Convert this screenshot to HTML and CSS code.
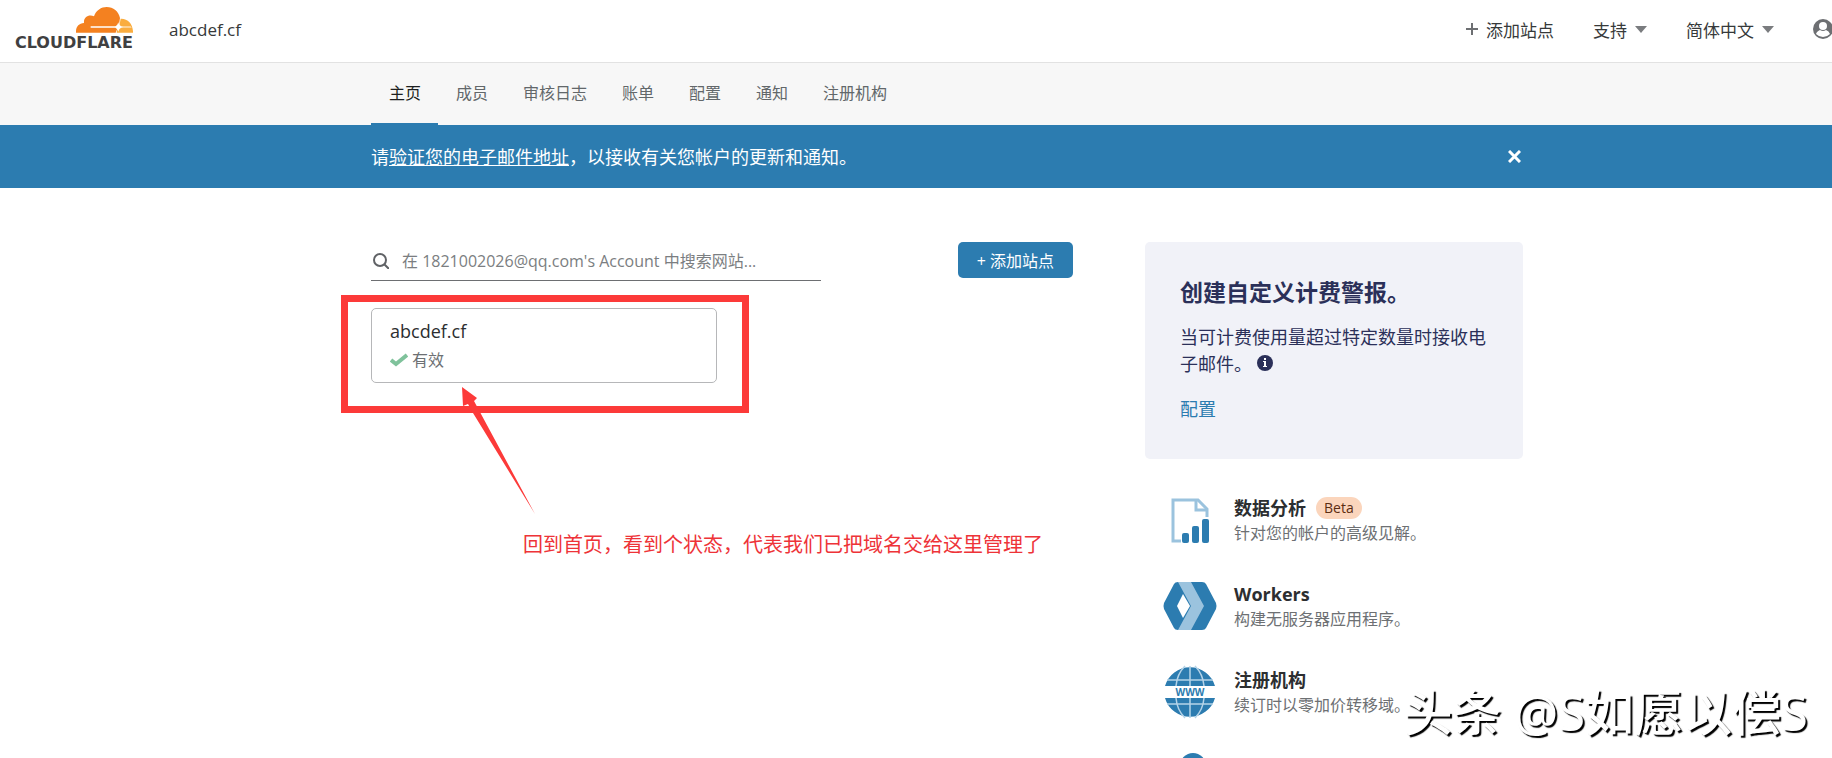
FILE: index.html
```
<!DOCTYPE html>
<html lang="zh-CN">

<head>
    <meta charset="UTF-8">
    <meta name="viewport" content="width=device-width, initial-scale=1.0">
    <title>abcdef.cf | Cloudflare</title>
    <link rel="stylesheet" href="styles.css">
</head>

<body>
    <div class="page">

        <header class="topbar">
            <a href="#" class="logo">
                <svg class="logo-cloud" viewBox="0 0 171 78" aria-hidden="true">
                    <path fill="#f48120" d="M0 77C-1 60 8 49 24 48C22 31 38 21 54 28C60 10 76 0 92 0C112 0 128 13 132 33L129 52L119 77Z" />
                    <path fill="#faad3f" d="M134 35C156 34 172 52 171 77H122C122 70 126 64 130 56Z" />
                    <path fill="#fff" d="M44 58H118Q125 55 127 46Q129 57 141 60Q129 63 127 74Q125 65 118 62H44Z" />
                    <path fill="#fff" d="M136 58H164L167 62H136Z" opacity=".6" />
                </svg>
                <span class="logo-name">CLOUDFLARE</span>
            </a>
            <a href="#" class="site-name">abcdef.cf</a>
            <div class="top-actions">
                <button class="top-btn">
                    <svg width="12" height="12" viewBox="0 0 12 12" aria-hidden="true"><path d="M6 0V12M0 6H12" stroke="#6d6f72" stroke-width="2" /></svg>
                    添加站点
                </button>
                <button class="top-btn">支持
                    <svg width="12" height="7" viewBox="0 0 12 7" aria-hidden="true"><path d="M0 0H12L6 7Z" fill="#7a7c7f" /></svg>
                </button>
                <button class="top-btn">简体中文
                    <svg width="12" height="7" viewBox="0 0 12 7" aria-hidden="true"><path d="M0 0H12L6 7Z" fill="#7a7c7f" /></svg>
                </button>
                <button class="top-btn" aria-label="账户">
                    <svg width="20" height="20" viewBox="0 0 20 20" aria-hidden="true">
                        <circle cx="10" cy="10" r="10" fill="#6d6f72" />
                        <circle cx="10" cy="7" r="4" fill="#fff" />
                        <path d="M3 15C4 12 7 11 7 11Q10 13 13 11Q16 12 17 15Q14 18 10 18Q6 18 3 15Z" fill="#fff" />
                    </svg>
                </button>
            </div>
        </header>

        <nav class="subnav">
            <div class="container tabs">
                <a href="#" class="tab active">主页</a>
                <a href="#" class="tab">成员</a>
                <a href="#" class="tab">审核日志</a>
                <a href="#" class="tab">账单</a>
                <a href="#" class="tab">配置</a>
                <a href="#" class="tab">通知</a>
                <a href="#" class="tab">注册机构</a>
            </div>
        </nav>

        <div class="banner">
            <div class="container banner-row">
                <p>请<a href="#">验证您的电子邮件地址</a>，以接收有关您帐户的更新和通知。</p>
                <button class="close" aria-label="关闭">
                    <svg width="13" height="13" viewBox="0 0 13 13" aria-hidden="true"><path d="M1 1L12 12M12 1L1 12" stroke="#fff" stroke-width="3" /></svg>
                </button>
            </div>
        </div>

        <main class="content">
            <div class="container columns">
                <section class="sites">
                    <div class="toolbar">
                        <label class="search">
                            <svg width="16" height="16" viewBox="0 0 16 16" fill="none" stroke="#606266" stroke-width="2" aria-hidden="true">
                                <circle cx="7" cy="7" r="6" />
                                <path d="M11 11L16 16" />
                            </svg>
                            <input type="text" aria-label="搜索网站" placeholder="在 1821002026@qq.com's Account 中搜索网站...">
                        </label>
                        <button class="add-btn">+ 添加站点</button>
                    </div>

                    <div class="marked">
                        <a href="#" class="site-card">
                            <span class="site-title">abcdef.cf</span>
                            <span class="site-status">
                                <svg width="18" height="14" viewBox="0 0 18 14" aria-hidden="true"><path d="M1 7L6 11L17 2" fill="none" stroke="#7fc29b" stroke-width="4" /></svg>
                                有效
                            </span>
                        </a>
                        <!-- red notes drawn over the page -->
                        <div class="frame"></div>
                        <svg class="arrow" width="74" height="128" viewBox="0 0 74 128" aria-hidden="true">
                            <path fill="#fc3a39" d="M0 0L15 11L12 14L73 127L11 26L6 17L1 19Z" />
                        </svg>
                        <p class="note">回到首页，看到个状态，代表我们已把域名交给这里管理了</p>
                    </div>
                </section>

                <aside class="side">
                    <div class="alert-card">
                        <h2>创建自定义计费警报。</h2>
                        <p>当可计费使用量超过特定数量时接收电子邮件。
                            <svg class="info" width="16" height="16" viewBox="0 0 16 16" aria-hidden="true">
                                <circle cx="8" cy="8" r="8" fill="#2b3059" />
                                <path d="M7 3H9V5H7ZM6 6H9V11H10V12H6V11H7V7H6Z" fill="#fff" />
                            </svg>
                        </p>
                        <a href="#">配置</a>
                    </div>

                    <ul class="products">
                        <li>
                            <svg class="product-icon" viewBox="0 0 54 54" aria-hidden="true">
                                <path d="M18 48H10V7H35L44 16V24" fill="none" stroke="#9bc3de" stroke-width="3" />
                                <path d="M33 7V17H44" fill="none" stroke="#9bc3de" stroke-width="3" />
                                <rect x="19" y="40" width="7" height="10" rx="2" fill="#2c7cb0" />
                                <rect x="29" y="33" width="7" height="17" rx="2" fill="#2c7cb0" />
                                <rect x="39" y="26" width="7" height="24" rx="2" fill="#2c7cb0" />
                            </svg>
                            <div>
                                <h3>数据分析 <span class="beta">Beta</span></h3>
                                <p>针对您的帐户的高级见解。</p>
                            </div>
                        </li>
                        <li>
                            <svg class="product-icon" viewBox="0 0 54 54" aria-hidden="true">
                                <path fill="#2c7cb0" d="M15 3H39Q42 3 43 5L53 24Q54 27 53 30L43 49Q42 51 39 51H15Q12 51 11 49L1 30Q0 27 1 24L11 5Q12 3 15 3Z" />
                                <path fill="#9bc3de" d="M15 3H28L41 27L28 51H15L28 27Z" />
                                <path fill="#fff" d="M20 15L27 27L20 39L14 27Z" />
                            </svg>
                            <div>
                                <h3>Workers</h3>
                                <p>构建无服务器应用程序。</p>
                            </div>
                        </li>
                        <li>
                            <svg class="product-icon" viewBox="0 0 54 54" aria-hidden="true">
                                <path fill="#2c7cb0" d="M2 21A26 26 0 0 1 52 21ZM2 33A26 26 0 0 0 52 33Z" />
                                <path fill="none" stroke="#b4d3e8" stroke-width="1.5" d="M27 1V21M27 33V53M4 15H50M4 39H50M22 1Q14 9 13 21M32 1Q40 9 41 21M13 33Q14 45 22 53M41 33Q40 45 32 53" />
                                <text x="27" y="31" class="www">WWW</text>
                            </svg>
                            <div>
                                <h3>注册机构</h3>
                                <p>续订时以零加价转移域。</p>
                            </div>
                        </li>
                        <li>
                            <svg class="product-icon" viewBox="0 0 54 54" aria-hidden="true">
                                <circle cx="30" cy="15" r="13" fill="#2c7cb0" />
                            </svg>
                        </li>
                    </ul>
                </aside>
            </div>
        </main>

        <div class="watermark">头条 @S如愿以偿S</div>
    </div>
</body>

</html>
```
FILE: styles.css
```
* {
    box-sizing: border-box;
}

body {
    margin: 0;
    font-family: "Open Sans", "Noto Sans CJK SC", sans-serif;
    font-size: 16px;
    font-weight: 400;
    color: #36393a;
    background: #fff;
}

h2,
h3,
p,
ul {
    margin: 0;
    padding: 0;
}

a {
    color: inherit;
    text-decoration: none;
}

button {
    padding: 0;
    border: none;
    background: none;
    font: inherit;
    color: inherit;
    cursor: pointer;
}

.page {
    position: relative;
    height: 100vh;
    overflow: hidden;
}

/* content sits a little right of centre */
.subnav,
.banner,
.content {
    padding-left: 62px;
}

.container {
    max-width: 1152px;
    margin: 0 auto;
}

/* top bar */
.topbar {
    display: flex;
    align-items: center;
    height: 63px;
    padding: 0 0 4px 15px;
    border-bottom: 1px solid #e2e2e2;
}

.logo {
    display: flex;
    flex-direction: column;
    align-items: flex-end;
    width: 118px;
    padding-top: 2px;
}

.logo-cloud {
    width: 57px;
    height: 26px;
}

.logo-name {
    font-family: "DejaVu Sans", sans-serif;
    font-size: 16px;
    font-weight: 700;
    line-height: 20px;
    color: #404041;
}

.site-name {
    margin-left: 36px;
    font-size: 17px;
}

.top-actions {
    display: flex;
    gap: 39px;
    margin-left: auto;
    margin-right: -1px;
    font-size: 17px;
}

.top-btn {
    display: flex;
    align-items: center;
    gap: 8px;
}

/* tabs */
.subnav {
    background: #f7f7f7;
}

.tabs {
    display: flex;
    height: 62px;
}

.tab {
    padding: 0 17px 0 18px;
    line-height: 60px;
    color: #62676a;
}

.tab.active {
    color: #1d1f20;
    border-bottom: 2px solid #2c7cb0;
}

/* banner */
.banner {
    background: #2c7cb0;
    color: #fff;
    font-size: 18px;
}

.banner-row {
    display: flex;
    align-items: center;
    justify-content: space-between;
    height: 63px;
}

.banner p {
    padding-bottom: 2px;
}

.banner a {
    text-decoration: underline;
}

.close {
    display: flex;
    padding: 2px;
}

/* main */
.content {
    padding-top: 54px;
}

.columns {
    display: grid;
    grid-template-columns: 1fr 378px;
    gap: 72px;
}

.toolbar {
    display: flex;
    justify-content: space-between;
    align-items: flex-start;
}

.search {
    display: flex;
    align-items: center;
    gap: 13px;
    width: 450px;
    height: 39px;
    padding-left: 2px;
    border-bottom: 1px solid #6d6f72;
}

.search input {
    flex: 1;
    min-width: 0;
    padding: 0;
    border: none;
    outline: none;
    background: none;
    font: inherit;
}

.search input::placeholder {
    color: #7b7e81;
    opacity: 1;
}

.add-btn {
    height: 36px;
    padding: 0 19px;
    border-radius: 5px;
    background: #2c7cb0;
    color: #fff;
}

.marked {
    position: relative;
    width: 346px;
    margin-top: 27px;
}

.site-card {
    display: block;
    height: 75px;
    padding: 8px 18px;
    border: 1px solid #b6b7b9;
    border-radius: 5px;
}

.site-title {
    display: block;
    font-size: 18px;
    line-height: 28px;
    color: #2c2e30;
}

.site-status {
    display: flex;
    align-items: center;
    gap: 4px;
    line-height: 30px;
    color: #6d7073;
}

.frame {
    position: absolute;
    top: -13px;
    left: -30px;
    width: 408px;
    height: 118px;
    border: 7px solid #fc3a39;
}

.arrow {
    position: absolute;
    top: 79px;
    left: 91px;
}

.note {
    position: absolute;
    top: 222px;
    left: 152px;
    font-size: 20px;
    line-height: 30px;
    white-space: nowrap;
    color: #ee3338;
}

/* side column */
.alert-card {
    height: 217px;
    padding: 33px 35px;
    border-radius: 5px;
    background: #f1f2f8;
    font-size: 18px;
    line-height: 27px;
    color: #2b3059;
}

.alert-card h2 {
    margin-bottom: 15px;
    font-size: 23px;
    line-height: 34px;
}

.alert-card p {
    margin-bottom: 18px;
}

.alert-card a {
    color: #2c7cb0;
}

.products {
    padding: 34px 18px 0;
    list-style: none;
}

.products li {
    display: flex;
    gap: 17px;
    height: 86px;
}

.product-icon {
    width: 54px;
    height: 54px;
}

.products h3 {
    display: flex;
    align-items: center;
    gap: 10px;
    font-size: 18px;
    line-height: 30px;
    color: #2c2e30;
}

.products p {
    line-height: 21px;
    color: #6d7073;
}

.beta {
    padding: 0 8px;
    border-radius: 11px;
    background: #fbd5bc;
    font-size: 14px;
    font-weight: 400;
    line-height: 22px;
    color: #5b2c12;
}

.www {
    font-family: "Open Sans", sans-serif;
    font-size: 10px;
    font-weight: 700;
    text-anchor: middle;
    fill: #2c7cb0;
}

.watermark {
    position: absolute;
    right: 24px;
    bottom: 16px;
    font-size: 49px;
    font-weight: 500;
    line-height: 60px;
    color: #fff;
    text-shadow: 2px 2px 1px #000;
}
```
